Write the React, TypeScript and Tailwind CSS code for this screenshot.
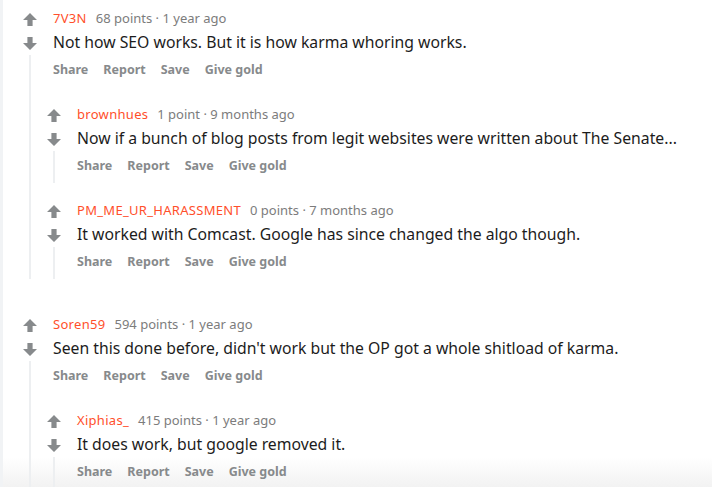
import React from "react";

type CommentData = {
	user: string;
	meta: string;
	body: string;
	replies?: CommentData[];
};

const threads: CommentData[] = [
	{
		user: "7V3N",
		meta: "68 points · 1 year ago",
		body: "Not how SEO works. But it is how karma whoring works.",
		replies: [
			{
				user: "brownhues",
				meta: "1 point · 9 months ago",
				body: "Now if a bunch of blog posts from legit websites were written about The Senate...",
			},
			{
				user: "PM_ME_UR_HARASSMENT",
				meta: "0 points · 7 months ago",
				body: "It worked with Comcast. Google has since changed the algo though.",
			},
		],
	},
	{
		user: "Soren59",
		meta: "594 points · 1 year ago",
		body: "Seen this done before, didn't work but the OP got a whole shitload of karma.",
		replies: [
			{
				user: "Xiphias_",
				meta: "415 points · 1 year ago",
				body: "It does work, but google removed it.",
			},
		],
	},
];

function Arrow({ down }: { down?: boolean }) {
	return (
		<svg
			width="14"
			height="13"
			viewBox="0 0 14 13"
			className={down ? "rotate-180" : ""}
		>
			<path d="M7 0 L14 7 H9.6 V13 H4.4 V7 H0 Z" fill="#878a8c" />
		</svg>
	);
}

function Comment({ c }: { c: CommentData }) {
	return (
		<div className="flex">
			{/* vote column + thread line */}
			<div className="w-6 shrink-0 flex flex-col items-center">
				<div className="h-5 pt-[2px] flex items-center justify-center">
					<Arrow />
				</div>
				<div className="h-6 mt-[3px] flex items-center justify-center">
					<Arrow down />
				</div>
				<div className="flex-1 w-[2px] bg-[#edeff1]" />
			</div>

			<div className="flex-1 min-w-0">
				<div className="pl-[11px] pb-[5px]">
					<div className="h-5 pt-[2px] flex items-center gap-[9px] text-[13px] font-['Noto_Sans',sans-serif]">
						<span className="text-[#ff4f2b] tracking-[0.3px]">{c.user}</span>
						<span className="text-[#7c7c7c]">{c.meta}</span>
					</div>
					<div className="h-6 mt-[3px] flex items-center text-[15.75px] text-[#1c1c1c] font-['Noto_Sans',sans-serif] whitespace-nowrap">
						{c.body}
					</div>
					<div className="h-6 mt-[3px] flex items-center gap-[15px] text-[12.5px] font-bold text-[#878a8c] font-['Noto_Sans',sans-serif]">
						<span>Share</span>
						<span>Report</span>
						<span>Save</span>
						<span>Give gold</span>
					</div>
				</div>
				{c.replies && (
					<div className="pt-[17px] flex flex-col gap-[17px]">
						{c.replies.map((r) => (
							<Comment key={r.user} c={r} />
						))}
					</div>
				)}
			</div>
		</div>
	);
}

export default function App() {
	return (
		<div className="w-[712px] h-[487px] overflow-hidden flex bg-gradient-to-b from-white from-[94%] to-[#f2f2f2]">
			<div className="w-[3px] shrink-0 bg-[#f1f3f5]" />
			<div className="flex-1 pl-[15px] pt-[8px] flex flex-col gap-[35px]">
				{threads.map((t) => (
					<Comment key={t.user} c={t} />
				))}
			</div>
		</div>
	);
}
